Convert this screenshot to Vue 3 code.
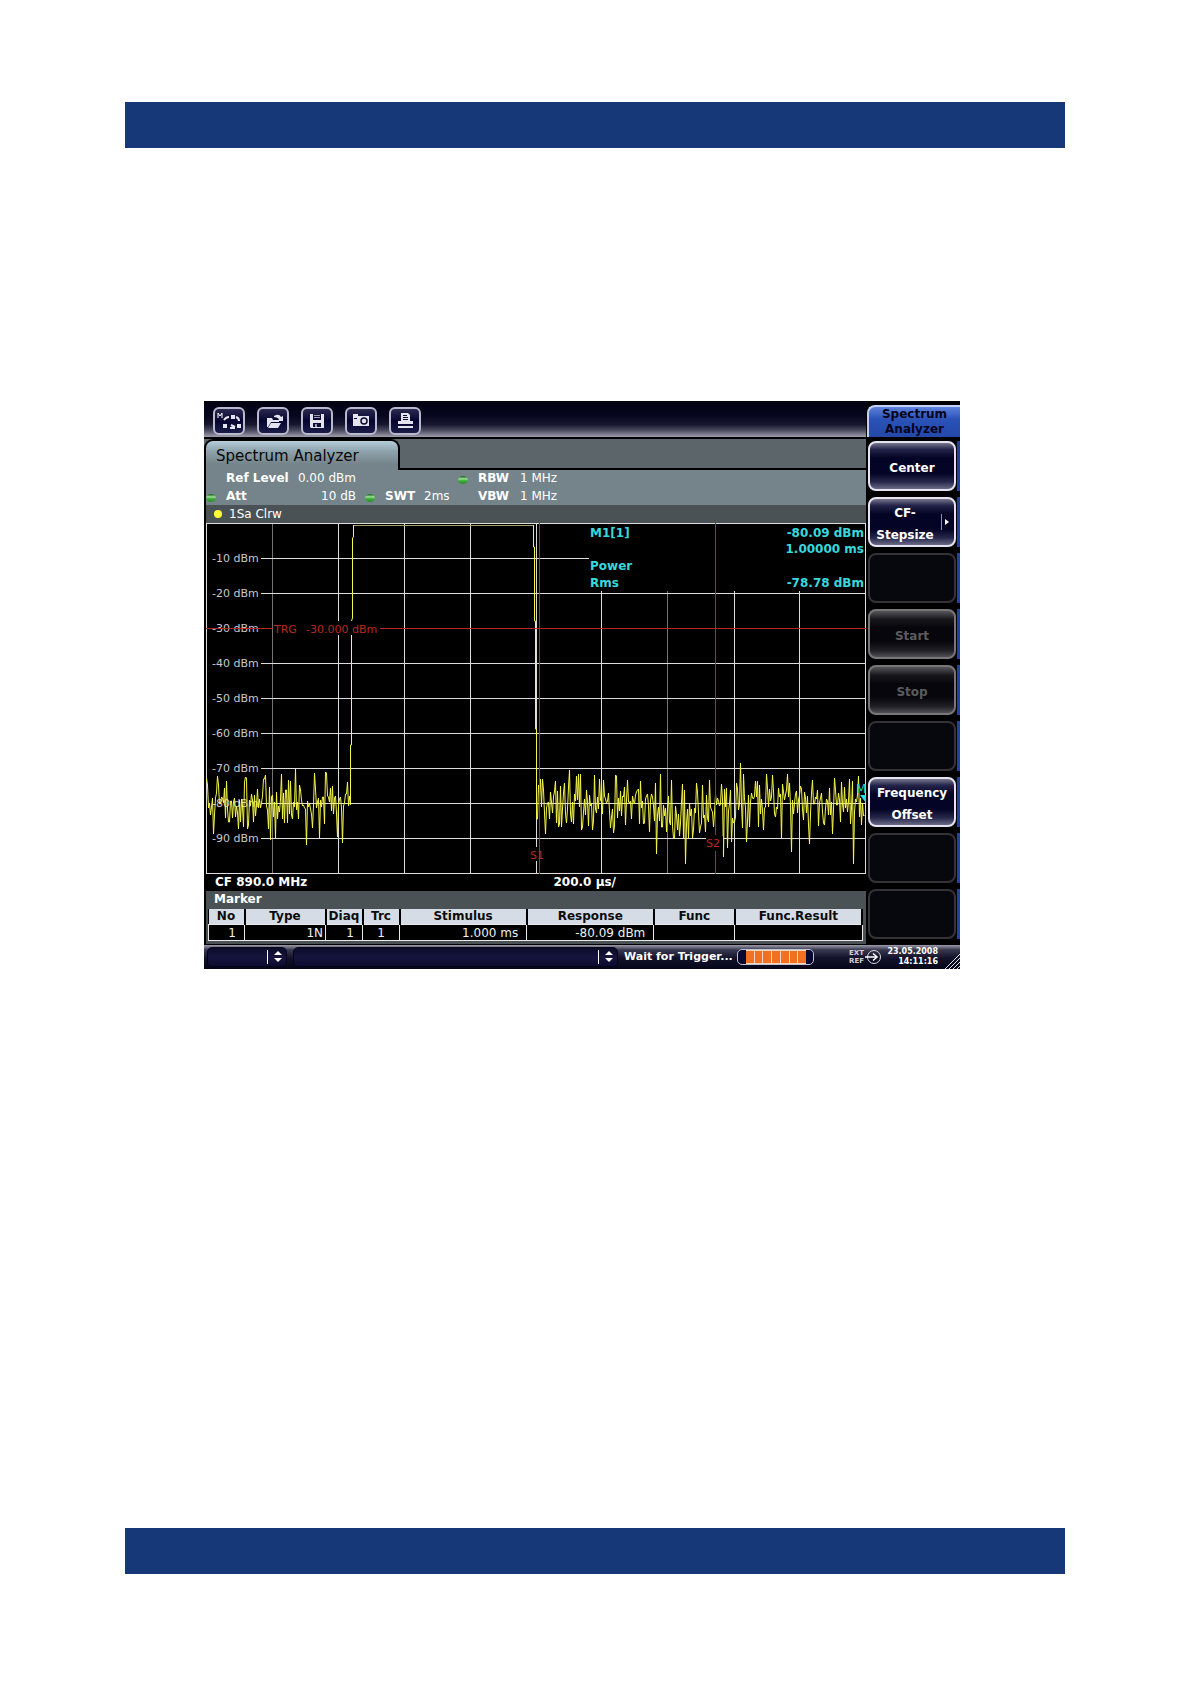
<script setup>
const rows = [
  { y: 35, label: '-10 dBm' },
  { y: 70, label: '-20 dBm' },
  { y: 105, label: '-30 dBm' },
  { y: 140, label: '-40 dBm' },
  { y: 175, label: '-50 dBm' },
  { y: 210, label: '-60 dBm' },
  { y: 245, label: '-70 dBm' },
  { y: 280, label: '-80 dBm' },
  { y: 315, label: '-90 dBm' },
]
const columns = [66, 132, 198, 264, 330, 395, 461, 528, 593]

// Distinct peaks and dips of the noise floor, keyed by x
const extremes = {
  1: 262, 7: 311, 12: 262, 40: 255, 41: 306, 64: 317, 69: 315, 82: 257, 100: 322, 108: 250, 119: 249,
  131: 314, 136: 320, 141: 259,
  336: 256, 339: 311, 372: 251, 376: 304, 386: 307, 388: 252, 393: 256, 404: 305, 410: 253,
  421: 257, 450: 331, 465: 257, 468: 316, 477: 315, 479: 341, 482: 315, 486: 315, 490: 260, 496: 262,
  517: 334, 521: 325, 525: 319, 534: 240, 537: 251, 540: 319, 549: 258, 557: 307, 566: 252,
  581: 251, 585: 329, 603: 321, 606: 257, 626: 311, 643: 256, 647: 341,
}

let seed = 890
function random() {
  seed = (seed * 16807) % 2147483647
  return seed / 2147483647
}
function noise(from, to) {
  const points = []
  for (let x = from; x <= to; x++) {
    const centre = x > 465 && x < 530 ? 290 : 281
    const value = centre + (random() + random() + random() - 1.5) * 28
    points.push(`${x + 0.5},${extremes[x] ?? Math.round(value)}`)
  }
  return points.join(' ')
}
const leftNoise = noise(0, 143) + ' 144.5,282 144.5,222 145.5,222 145.5,98 146.5,95 146.5,15 147.5,14 147.5,2'
const rightNoise = '327.5,2 327.5,24 328.5,24 328.5,98 329.5,98 329.5,206 330.5,206 330.5,296 331.5,296 332.5,262 ' + noise(333, 658)

const softkeys = [
  { lines: ['Center'], state: 'on' },
  { lines: ['CF-', 'Stepsize'], state: 'on', more: true },
  { lines: [], state: 'empty' },
  { lines: ['Start'], state: 'dim' },
  { lines: ['Stop'], state: 'dim' },
  { lines: [], state: 'empty' },
  { lines: ['Frequency', 'Offset'], state: 'on' },
  { lines: [], state: 'empty' },
  { lines: [], state: 'empty' },
]
</script>

<template>
  <div class="page">
    <header class="band"></header>
    <main class="content">
      <section class="instrument">
        <div class="upper">
          <div class="screen">
            <nav class="toolbar">
              <button type="button" aria-label="Measurement">
                <svg width="28" height="24" viewBox="0 0 28 24">
                  <path d="M3 9V4l2 3 2-3v5" fill="none" stroke="#fff" />
                  <path d="M16 6h4v4h-4zM8 15h4v4H8zM22 15h4v4h-4z" fill="#e4e4ee" />
                  <path d="M14 8q-3 0-5 3M21 8q3 1 3 4M15 19h5M20 18l-4-2" fill="none" stroke="#e4e4ee" stroke-width="2" />
                </svg>
              </button>
              <button type="button" aria-label="Open">
                <svg width="28" height="24" viewBox="0 0 28 24">
                  <path d="M8 18V9h5l1 2h6v2h-8l-3 5zM12 14h10l-3 5H9z" fill="#e4e4ee" />
                  <path d="M15 7q5-3 7 1l2-1v5h-5l1-2q-2-2-5-2" fill="#e4e4ee" />
                </svg>
              </button>
              <button type="button" aria-label="Save">
                <svg width="28" height="24" viewBox="0 0 28 24">
                  <path fill-rule="evenodd" d="M7 5h14v14H8l-1-1zM10 5v6h8V5zM10 14v4h8v-4z" fill="#e4e4ee" />
                  <path d="M11 6h6v1h-6zM11 8h6v1h-6zM12 15h2v3h-2z" fill="#9c9cb4" />
                </svg>
              </button>
              <button type="button" aria-label="Screenshot">
                <svg width="28" height="24" viewBox="0 0 28 24">
                  <path d="M6 8V5h5v2h11v10H6z" fill="#e4e4ee" />
                  <circle cx="17" cy="12" r="3" fill="#e4e4ee" stroke="#0b0b35" stroke-width="1.5" />
                  <path d="M7 9h3v1H7z" fill="#0b0b35" />
                </svg>
              </button>
              <button type="button" aria-label="Print">
                <svg width="28" height="24" viewBox="0 0 28 24">
                  <path d="M11 4h6l2 2v6h3v3H7v-3h3V4zM7 17h15v2H7z" fill="#e4e4ee" />
                  <path d="M12 6h4v1h-4zM12 8h5v1h-5zM12 10h5v1h-5z" fill="#0b0b35" />
                </svg>
              </button>
            </nav>
            <div class="tabs">
              <h1 class="tab">Spectrum Analyzer</h1>
              <div class="tab-rest"></div>
            </div>
            <div class="settings">
              <span></span><b>Ref Level</b><span class="right">0.00 dBm</span>
              <span></span><span></span><span></span>
              <i class="led"></i><b>RBW</b><span>1 MHz</span>
              <i class="led"></i><b>Att</b><span class="right">10 dB</span>
              <i class="led mid"></i><b>SWT</b><span>2ms</span>
              <span></span><b>VBW</b><span>1 MHz</span>
            </div>
            <div class="trace-bar"><i class="dot"></i>1Sa Clrw</div>

            <svg class="chart" viewBox="0 0 660 351">
              <rect width="660" height="351" fill="#000" />
              <g stroke="#dcdcdc">
                <line v-for="x in columns" :key="x" :x1="x + 0.5" :x2="x + 0.5" y1="0" y2="351"
                  :class="{ faint: x === 66 || x === 461 }" />
                <line v-for="r in rows" :key="r.y" x1="55" x2="659" :y1="r.y + 0.5" :y2="r.y + 0.5" />
                <rect x="0.5" y="0.5" width="659" height="350" fill="none" />
              </g>
              <text v-for="r in rows" :key="r.label" x="6" :y="r.y + 4" class="scale">{{ r.label }}</text>
              <rect x="383" y="1" width="276" height="67" fill="#000" />
              <path d="M147 2.5H328" stroke="#a3a35c" />
              <g fill="none" stroke="#f6f648" stroke-width="1">
                <polyline :points="leftNoise" />
                <polyline :points="rightNoise" />
              </g>
              <rect x="67" y="98" width="107" height="14" fill="#000" />
              <rect x="500" y="313" width="17" height="14" fill="#000" />
              <rect x="323" y="324" width="16" height="14" fill="#000" />
              <g stroke="#b9281f">
                <path d="M0 105.5H67M174 105.5H660M333.5 0V351M509.5 0V312M509.5 328V351" fill="none" />
              </g>
              <g class="alert">
                <text x="68" y="110">TRG</text>
                <text x="100" y="110">-30.000 dBm</text>
                <text x="324" y="336">S1</text>
                <text x="500" y="324">S2</text>
              </g>
              <text x="650" y="270" class="marker-name">M</text>
              <path d="M654 272h6v8z" fill="#20e4e4" />
              <g class="readout">
                <text x="384" y="14">M1[1]</text>
                <text x="658" y="14" text-anchor="end">-80.09 dBm</text>
                <text x="658" y="30" text-anchor="end">1.00000 ms</text>
                <text x="384" y="47">Power</text>
                <text x="384" y="64">Rms</text>
                <text x="658" y="64" text-anchor="end">-78.78 dBm</text>
              </g>
            </svg>

            <div class="axis"><span>CF 890.0 MHz</span><span>200.0 µs/</span></div>
            <h2 class="marker-title">Marker</h2>
            <div class="table-wrap">
              <table>
                <colgroup>
                  <col class="c-no" /><col class="c-type" /><col class="c-small" /><col class="c-small" />
                  <col class="c-stim" /><col class="c-stim" /><col class="c-type" /><col class="c-stim" />
                </colgroup>
                <thead>
                  <tr>
                    <th>No</th><th>Type</th><th>Diaq</th><th>Trc</th><th>Stimulus</th>
                    <th>Response</th><th>Func</th><th>Func.Result</th>
                  </tr>
                </thead>
                <tbody>
                  <tr>
                    <td>1</td><td class="tight">1N</td><td>1</td><td class="centre">1</td><td>1.000 ms</td>
                    <td>-80.09 dBm</td><td></td><td></td>
                  </tr>
                </tbody>
              </table>
            </div>
          </div>

          <aside class="softkeys">
            <h2 class="softkey-title">Spectrum<br />Analyzer</h2>
            <div v-for="(key, i) in softkeys" :key="i" class="slot">
              <button type="button" :class="['softkey', key.state]" :disabled="key.state !== 'on'"
                :aria-label="key.lines.length ? undefined : 'Unassigned'">
                <span class="caption"><span v-for="line in key.lines" :key="line">{{ line }}</span></span>
                <svg v-if="key.more" width="14" height="18" viewBox="0 0 14 18">
                  <path d="M1.500 1V17" stroke="#8c8cb4" />
                  <path d="M5 6v6l4-3z" fill="#fff" />
                </svg>
              </button>
            </div>
          </aside>
        </div>

        <footer class="status">
          <button type="button" class="picker small" aria-label="Channel">
            <svg width="16" height="16" viewBox="0 0 16 16">
              <path d="M0.500 1V15" stroke="#fff" />
              <path d="M7 6h8l-4-4zM7 9h8l-4 4z" fill="#fff" />
            </svg>
          </button>
          <button type="button" class="picker wide" aria-label="Message">
            <svg width="16" height="16" viewBox="0 0 16 16">
              <path d="M0.500 1V15" stroke="#fff" />
              <path d="M7 6h8l-4-4zM7 9h8l-4 4z" fill="#fff" />
            </svg>
          </button>
          <span class="message">Wait for Trigger...</span>
          <span class="progress"><i v-for="n in 7" :key="n"></i></span>
          <span class="reference">EXT<br />REF</span>
          <svg class="ref-icon" width="20" height="16" viewBox="0 0 20 16">
            <circle cx="12" cy="8" r="6.500" fill="none" stroke="#d8d8e0" />
            <path d="M3 8h12M11 4.500l4 3.500-4 3.500" fill="none" stroke="#fff" stroke-width="1.500" />
          </svg>
          <time class="clock">23.05.2008<br />14:11:16</time>
          <svg class="grip" width="15" height="15" viewBox="0 0 15 15">
            <path d="M0 15L15 0M4 15L15 4M8 15L15 8M12 15L15 12" stroke="#e0e0e8" />
          </svg>
        </footer>
      </section>
    </main>
    <footer class="band"></footer>
  </div>
</template>

<style>
body {
  margin: 0;
  background: #fff;
}
</style>

<style scoped>
.page {
  box-sizing: border-box;
  display: flex;
  flex-direction: column;
  min-height: 100vh;
  padding: 102px 126px 110px 125px;
  font: 12px "DejaVu Sans", Verdana, sans-serif;
}
.page * {
  box-sizing: border-box;
}
.band {
  height: 46px;
  background: #163878;
}
.content {
  flex: 1;
  padding: 253px 105px 40px 79px;
}
.instrument {
  background: #000;
  color: #fff;
}
.upper {
  display: grid;
  grid-template-columns: minmax(0, 1fr) 94px;
}
h1, h2 {
  margin: 0;
  font-size: 12px;
}
button {
  padding: 0;
  font: inherit;
  color: inherit;
}

/* toolbar */
.toolbar {
  display: flex;
  gap: 12px;
  height: 36px;
  padding: 6px 9px 0;
  background: linear-gradient(#02020f 0%, #06061f 40%, #16162f 65%, #4c4c60 82%, #a09fae 100%);
}
.toolbar button {
  display: flex;
  align-items: center;
  justify-content: center;
  width: 32px;
  height: 28px;
  border: 2px solid #b9b9cd;
  border-radius: 6px;
  background: linear-gradient(#2a2a50, #050530 50%, #1c1c48);
}

/* tab row and settings */
.tabs {
  display: flex;
  height: 33px;
  padding-top: 2px;
  background: linear-gradient(#000 2px, #5b656a 2px);
}
.tab {
  width: 196px;
  padding-left: 10px;
  border: 2px solid #000;
  border-bottom: 0;
  border-radius: 9px 9px 0 0;
  background: linear-gradient(#b4cedb, #8fa3ad 35%, #74848a 80%);
  color: #080808;
  font-size: 15px;
  font-weight: 400;
  line-height: 30px;
}
.tab-rest {
  flex: 1;
  border-bottom: 2px solid #000;
}
.settings {
  display: grid;
  grid-template-columns: 20px 68px 62px 29px 39px 34px 20px 42px 1fr;
  grid-auto-rows: 18px;
  height: 35px;
  border-left: 2px solid #000;
  background: #74848a;
  line-height: 17px;
  white-space: nowrap;
}
.right {
  text-align: right;
}
.led {
  width: 10px;
  height: 8px;
  margin-top: 6px;
  border-radius: 50%;
  background: linear-gradient(#267a26 10%, #a6dca0 35%, #37b037 60%, #2c8a2c);
}
.led.mid {
  margin-left: 9px;
}
.trace-bar {
  display: flex;
  align-items: center;
  gap: 7px;
  height: 18px;
  margin-left: 2px;
  padding-left: 8px;
  background: #4a5256;
  line-height: 16px;
}
.dot {
  width: 8px;
  height: 8px;
  border-radius: 50%;
  background: #ffff38;
}

/* diagram */
.chart {
  display: block;
  width: calc(100% - 2px);
  margin-left: 2px;
}
.chart .faint {
  stroke: #747474;
}
.scale {
  font-size: 11px;
  fill: #c8c8c8;
}
.alert {
  font-size: 11px;
  fill: #b9281f;
}
.marker-name {
  font-size: 12px;
  fill: #20d0d0;
}
.readout {
  font-weight: 700;
  fill: #38d8dc;
}
.axis {
  display: grid;
  grid-template-columns: 52% 1fr;
  height: 17px;
  padding-left: 11px;
  font-weight: 700;
  line-height: 17px;
}
.marker-title {
  height: 18px;
  margin-left: 2px;
  padding-left: 8px;
  background: #4a5256;
  line-height: 17px;
}
.table-wrap {
  margin-left: 2px;
  padding: 0 3px 3px 2px;
  background: #4a5256;
}
table {
  width: 100%;
  border-collapse: collapse;
  table-layout: fixed;
  background: #000;
}
th, td {
  height: 15px;
  padding: 0;
  line-height: 14px;
}
th {
  border-right: 2px solid #000;
  background: #d5dce6;
  color: #0c0c0c;
}
td {
  height: 16px;
  padding: 1px 8px 0 0;
  border: 1px solid #e8e8e8;
  color: #f0f0f0;
  text-align: right;
}
td.tight {
  padding-right: 2px;
}
td.centre {
  padding-right: 0;
  text-align: center;
}
.c-no { width: 36px; }
.c-type { width: 81px; }
.c-small { width: 37px; }

/* softkeys */
.softkeys {
  display: flex;
  flex-direction: column;
  gap: 6px;
  padding-top: 4px;
  background: #000;
}
.softkey-title {
  height: 32px;
  margin: 0 0 -2px 1px;
  border: 2px solid #c3d0f4;
  border-width: 2px 0 0 2px;
  border-radius: 8px 0 0 0;
  background: linear-gradient(#5d82dc, #2a52b8 40%, #2448a8);
  color: #04041c;
  line-height: 15px;
  text-align: center;
}
.slot {
  height: 50px;
  padding: 0 4px 0 2px;
  background: linear-gradient(90deg, #000 91px, #2440a0 91px);
}
.softkey {
  display: flex;
  align-items: center;
  justify-content: center;
  width: 100%;
  height: 50px;
  border: 2px solid #e4e4f0;
  border-radius: 8px;
  background: linear-gradient(#77778f, #24244a 14%, #040426 32%, #040426 66%, #26264a 84%, #6a6a86);
  font-weight: 700;
}
.softkey.dim {
  border-color: #77777a;
  background: linear-gradient(#55555a, #18181c 18%, #06060c 36%, #06060c 66%, #202026 86%, #505056);
  color: #5c5c5c;
}
.softkey.empty {
  border-color: #333338;
  background: #07070e;
}
.caption {
  display: flex;
  flex-direction: column;
  flex: 1;
  padding-top: 3px;
  line-height: 22px;
  text-align: center;
}

/* status bar */
.status {
  display: flex;
  align-items: center;
  height: 25px;
  padding-left: 3px;
  border-top: 1px solid #000;
  background: linear-gradient(#9c9cac, #38384e 20%, #12122a 55%, #05051a);
}
.picker {
  display: flex;
  align-items: center;
  justify-content: flex-end;
  height: 20px;
  padding-right: 3px;
  border: 1px solid #05051a;
  border-radius: 5px;
  background: linear-gradient(#0a0a28, #15153f 50%, #0c0c30);
}
.small {
  width: 80px;
}
.wide {
  flex: 1;
  margin-left: 6px;
}
.message {
  width: 110px;
  margin: 0 3px 0 6px;
  font-size: 11px;
  font-weight: 700;
  line-height: 22px;
  white-space: nowrap;
}
.progress {
  display: flex;
  justify-content: center;
  gap: 1px;
  width: 77px;
  height: 16px;
  padding: 1px 7px 1px 8px;
  border: 1px solid #c0c0d0;
  border-radius: 5px;
  background: linear-gradient(90deg, #080830 8px, #f6d8c0 8px, #f6d8c0 68px, #080830 68px);
}
.progress i {
  flex: 1;
  background: #f27022;
}
.reference {
  margin-left: 35px;
  color: #d0d0d8;
  font-size: 7px;
  font-weight: 700;
  line-height: 8px;
}
.ref-icon {
  margin-left: -2px;
}
.clock {
  width: 56px;
  margin-right: 7px;
  font-size: 8px;
  font-weight: 700;
  line-height: 10px;
  text-align: right;
}
.grip {
  align-self: flex-end;
}
</style>
